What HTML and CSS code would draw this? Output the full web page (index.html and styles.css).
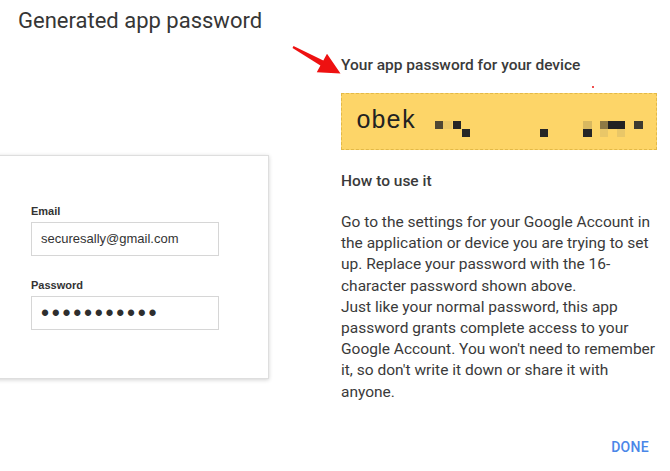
FILE: index.html
```html
<!DOCTYPE html>
<html lang="en">
<head>
    <meta charset="UTF-8">
    <meta name="viewport" content="width=device-width, initial-scale=1.0">
    <title>Generated app password</title>
    <link rel="stylesheet" href="styles.css">
</head>
<body>
    <div class="dialog">
        <h1 class="title">Generated app password</h1>
        <div class="body">
            <div class="left">
                <div class="card">
                    <div class="label">Email</div>
                    <div class="field">securesally@gmail.com</div>
                    <div class="label label-gap">Password</div>
                    <div class="field field-dots">•••••••••••</div>
                </div>
            </div>
            <div class="right">
                <p class="subhead">Your app password for your device</p>
                <div class="pw-box">
                    <span class="pw-text">obek</span>
                    <span class="px px1"></span>
                    <span class="px px2"></span>
                    <span class="px px3"></span>
                    <span class="px px4"></span>
                    <span class="px px5"></span>
                    <span class="px px6"></span>
                    <span class="px px7"></span>
                    <span class="px px8"></span>
                    <span class="px px9"></span>
                    <span class="px px10"></span>
                    <span class="px px11"></span>
                    <span class="px px12"></span>
                </div>
                <p class="subhead howto">How to use it</p>
                <p class="desc">Go to the settings for your Google Account in the application or device you are trying to set up. Replace your password with the 16-character password shown above.<br>Just like your normal password, this app password grants complete access to your Google Account. You won't need to remember it, so don't write it down or share it with anyone.</p>
            </div>
        </div>
        <div class="actions">
            <span class="done">DONE</span>
        </div>
        <svg class="arrow" width="60" height="40" viewBox="285 38 60 40">
            <polygon points="293.5,46.1 323.3,60.4 327,53.8 340.5,73.5 316.8,72.2 320.4,65.6 292.5,47.9" fill="#ee1111"/>
        </svg>
        <span class="speck"></span>
    </div>
</body>
</html>
```

FILE: styles.css
```css
body {
    margin: 0;
    padding: 0;
    background-color: #fff;
    font-family: Roboto, "Noto Sans", Arial, sans-serif;
    color: #3a3a3a;
}
.dialog {
    position: relative;
    width: 670px;
    height: 471px;
    overflow: hidden;
}
.title {
    margin: 0;
    padding-left: 18px;
    height: 42px;
    font-size: 22px;
    line-height: 41px;
    font-weight: 400;
    color: #363636;
}
.body {
    display: flex;
}
.left {
    width: 341px;
    flex: none;
}
.card {
    margin-top: 113px;
    margin-left: -30px;
    width: 299px;
    height: 224px;
    box-sizing: border-box;
    padding: 49px 0 0 60px;
    background-color: #fff;
    border: 1px solid #dedede;
    box-shadow: 0 1px 4px rgba(0,0,0,0.18);
    font-family: "Liberation Sans", Arial, sans-serif;
    color: #333;
}
.label {
    font-size: 11px;
    line-height: 13px;
    font-weight: bold;
    margin-bottom: 4px;
}
.label-gap {
    margin-top: 23px;
}
.field {
    width: 188px;
    height: 34px;
    box-sizing: border-box;
    border: 1px solid #d6d6d6;
    padding-left: 9px;
    font-size: 13px;
    line-height: 32px;
}
.field-dots {
    font-size: 23px;
    letter-spacing: 2.7px;
    color: #2e2e2e;
}
.right {
    width: 316px;
    flex: none;
}
.subhead {
    margin: 13px 0 0;
    font-size: 15.5px;
    line-height: 20px;
    font-weight: 500;
    color: #3a3a3a;
}
.pw-box {
    position: relative;
    margin-top: 18px;
    height: 57px;
    box-sizing: border-box;
    background-color: #fdd568;
    border: 1px dashed #e3b947;
    display: flex;
    align-items: center;
    padding-left: 14px;
}
.pw-text {
    font-family: "Liberation Mono", "Courier New", monospace;
    font-size: 25px;
    color: #222;
}
.px {
    position: absolute;
    width: 8px;
    height: 8px;
    background-color: #262626;
}
.px1 { left: 93px; top: 27px; background-color: #4f4733; }
.px2 { left: 101px; top: 27px; width: 9px; background-color: #ecc865; }
.px3 { left: 111px; top: 27px; }
.px4 { left: 120px; top: 35px; }
.px5 { left: 198px; top: 35px; }
.px6 { left: 241px; top: 27px; width: 9px; background-color: #d8b860; }
.px7 { left: 241px; top: 35px; width: 9px; }
.px8 { left: 258px; top: 27px; background-color: #8e7a45; }
.px9 { left: 266px; top: 27px; width: 17px; background-color: #222; }
.px10 { left: 258px; top: 35px; background-color: #e9c768; }
.px11 { left: 275px; top: 35px; background-color: #e9c768; }
.px12 { left: 292px; top: 27px; width: 9px; background-color: #3d3a30; }
.howto {
    margin-top: 21px;
}
.desc {
    margin: 21px 0 0;
    font-size: 15.5px;
    line-height: 21.2px;
    color: #3a3a3a;
}
.actions {
    position: absolute;
    right: 21px;
    bottom: 14px;
}
.done {
    font-size: 14px;
    line-height: 20px;
    font-weight: 500;
    letter-spacing: 0.3px;
    color: #4a86e8;
}
.arrow {
    position: absolute;
    left: 285px;
    top: 38px;
}
.speck {
    position: absolute;
    left: 592px;
    top: 86px;
    width: 2px;
    height: 2px;
    background-color: #f05050;
}
```
